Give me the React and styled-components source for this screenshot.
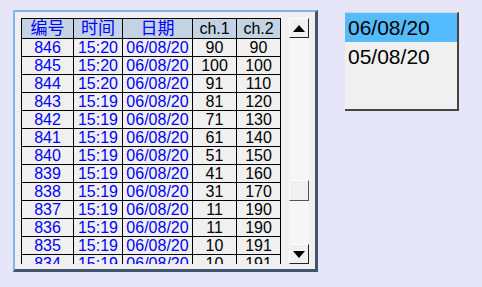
import React from 'react';
import styled, { createGlobalStyle } from 'styled-components';

const Global = createGlobalStyle`
  html, body {
    margin: 0;
    padding: 0;
    background: #e6e6f8;
    font-family: 'Liberation Sans', Arial, 'Noto Sans CJK SC', sans-serif;
  }
`;

const Page = styled.div`
  display: flex;
  align-items: flex-start;
  padding: 10px 0 0 13px;
  height: 287px;
  box-sizing: border-box;
`;

const Panel = styled.div`
  display: flex;
  gap: 8px;
  width: 305px;
  height: 262px;
  box-sizing: border-box;
  padding: 6px 6px 0 6px;
  background: #f0f0f0;
  border-top: 2px solid #7fb6ea;
  border-left: 2px solid #7fb6ea;
  border-right: 3px solid #44546c;
  border-bottom: 3px solid #44546c;
`;

const TableView = styled.div`
  width: 260px;
  height: 246px;
  overflow: hidden;
`;

const Grid = styled.table`
  border-collapse: collapse;
  table-layout: fixed;
  width: 260px;
  font-size: 16px;
`;

const HeadCell = styled.th`
  height: 19px;
  padding: 0;
  font-weight: normal;
  font-size: ${({ $cjk }) => ($cjk ? '17px' : '16px')};
  line-height: 19px;
  background: #c3d3e3;
  border: 1px solid #000;
  color: ${({ $blue }) => ($blue ? '#0000ff' : '#000')};
  font-family: 'Liberation Sans', 'Noto Sans CJK SC', sans-serif;
  text-align: center;
`;

const Cell = styled.td`
  height: 17px;
  padding: 0;
  line-height: 17px;
  border: 1px solid #000;
  color: ${({ $blue }) => ($blue ? '#0000ff' : '#000')};
  text-align: center;
  white-space: nowrap;
`;

const ScrollBar = styled.div`
  display: flex;
  flex-direction: column;
  width: 20px;
  height: 246px;
  background: #f6f6f6;
`;

const ArrowButton = styled.div`
  width: 20px;
  height: 20px;
  box-sizing: border-box;
  display: flex;
  align-items: center;
  justify-content: center;
  background: #f0f0f0;
  border-top: 1px solid #fff;
  border-left: 1px solid #fff;
  border-right: 1px solid #222;
  border-bottom: 1px solid #222;
`;

const Track = styled.div`
  flex: 1;
  display: flex;
  flex-direction: column;
  padding-top: ${({ $offset }) => $offset}px;
`;

const Thumb = styled.div`
  width: 20px;
  height: 21px;
  box-sizing: border-box;
  background: #f0f0f0;
  border-top: 1px solid #fff;
  border-left: 1px solid #fff;
  border-right: 1px solid #555;
  border-bottom: 1px solid #555;
`;

const ListBox = styled.div`
  margin: 2px 0 0 27px;
  width: 114px;
  height: 99px;
  box-sizing: border-box;
  background: #f0f0f0;
  border-top: 1px solid #d6d6d6;
  border-right: 2px solid #444;
  border-bottom: 2px solid #444;
`;

const ListItem = styled.div`
  height: 29px;
  line-height: 29px;
  padding-left: 3px;
  font-size: 21px;
  color: #000;
  background: ${({ $selected }) => ($selected ? '#55bbff' : 'transparent')};
`;

const rows = [
  [846, '15:20', 90, 90],
  [845, '15:20', 100, 100],
  [844, '15:20', 91, 110],
  [843, '15:19', 81, 120],
  [842, '15:19', 71, 130],
  [841, '15:19', 61, 140],
  [840, '15:19', 51, 150],
  [839, '15:19', 41, 160],
  [838, '15:19', 31, 170],
  [837, '15:19', 11, 190],
  [836, '15:19', 11, 190],
  [835, '15:19', 10, 191],
  [834, '15:19', 10, 191],
];

const Up = () => (
  <svg width="12" height="7" viewBox="0 0 12 7">
    <polygon points="6,0 12,7 0,7" fill="#000" />
  </svg>
);

const Down = () => (
  <svg width="12" height="7" viewBox="0 0 12 7">
    <polygon points="0,0 12,0 6,7" fill="#000" />
  </svg>
);

export default function App() {
  return (
    <>
      <Global />
      <Page>
        <Panel>
          <TableView>
            <Grid>
              <colgroup>
                <col style={{ width: 52 }} />
                <col style={{ width: 49 }} />
                <col style={{ width: 70 }} />
                <col style={{ width: 44 }} />
                <col style={{ width: 44 }} />
              </colgroup>
              <thead>
                <tr>
                  <HeadCell $blue $cjk>编号</HeadCell>
                  <HeadCell $blue $cjk>时间</HeadCell>
                  <HeadCell $blue $cjk>日期</HeadCell>
                  <HeadCell>ch.1</HeadCell>
                  <HeadCell>ch.2</HeadCell>
                </tr>
              </thead>
              <tbody>
                {rows.map(([id, time, c1, c2]) => (
                  <tr key={id}>
                    <Cell $blue>{id}</Cell>
                    <Cell $blue>{time}</Cell>
                    <Cell $blue>06/08/20</Cell>
                    <Cell>{c1}</Cell>
                    <Cell>{c2}</Cell>
                  </tr>
                ))}
              </tbody>
            </Grid>
          </TableView>
          <ScrollBar>
            <ArrowButton><Up /></ArrowButton>
            <Track $offset={142}>
              <Thumb />
            </Track>
            <ArrowButton><Down /></ArrowButton>
          </ScrollBar>
        </Panel>
        <ListBox>
          <ListItem $selected>06/08/20</ListItem>
          <ListItem>05/08/20</ListItem>
        </ListBox>
      </Page>
    </>
  );
}
